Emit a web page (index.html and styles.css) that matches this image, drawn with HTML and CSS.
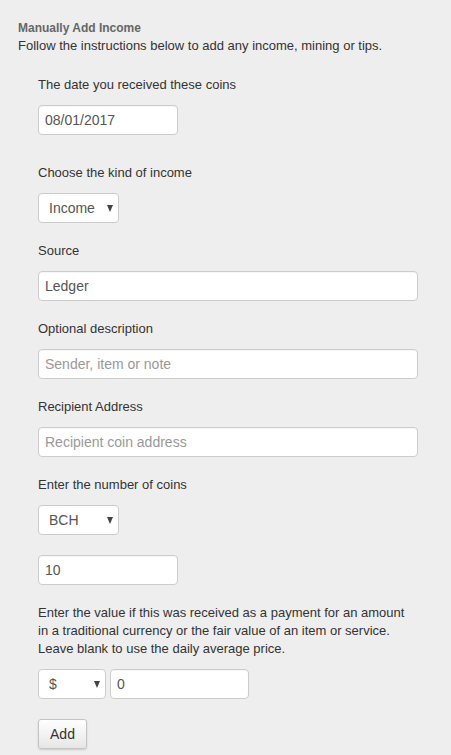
FILE: index.html
```html
<!DOCTYPE html>
<html>
<head>
<meta charset="utf-8">
<link rel="stylesheet" href="styles.css">
</head>
<body>
<div class="panel">
  <h4 class="title">Manually Add Income</h4>
  <p class="intro">Follow the instructions below to add any income, mining or tips.</p>
  <form class="form">
    <div class="group group-date">
      <label class="label">The date you received these coins</label>
      <input class="field short" type="text" value="08/01/2017">
    </div>
    <div class="group">
      <label class="label">Choose the kind of income</label>
      <span class="select-wrap sel-kind"><select class="select"><option>Income</option></select></span>
    </div>
    <div class="group">
      <label class="label">Source</label>
      <input class="field wide" type="text" value="Ledger">
    </div>
    <div class="group">
      <label class="label">Optional description</label>
      <input class="field wide" type="text" placeholder="Sender, item or note">
    </div>
    <div class="group">
      <label class="label">Recipient Address</label>
      <input class="field wide" type="text" placeholder="Recipient coin address">
    </div>
    <div class="group">
      <label class="label">Enter the number of coins</label>
      <span class="select-wrap sel-kind"><select class="select"><option>BCH</option></select></span>
      <div class="spacer"></div>
      <input class="field short" type="text" value="10">
    </div>
    <p class="note">Enter the value if this was received as a payment for an amount in a traditional currency or the fair value of an item or service. Leave blank to use the daily average price.</p>
    <div class="row">
      <span class="select-wrap sel-cur"><select class="select"><option>$</option></select></span>
      <input class="field amount" type="text" value="0">
    </div>
    <button class="btn" type="button">Add</button>
  </form>
</div>
</body>
</html>
```
FILE: styles.css
```css
html, body {
  margin: 0;
  padding: 0;
  background: #eeeeee;
}
body {
  font-family: "Liberation Sans", Arial, sans-serif;
  font-size: 13px;
  color: #333;
  width: 451px;
  height: 755px;
  overflow: hidden;
}
.panel {
  padding: 18px 0 0 18px;
}
.title {
  margin: 0;
  padding-top: 1px;
  font-size: 12px;
  font-weight: bold;
  color: #666;
  line-height: 18px;
}
.intro {
  margin: 0;
  line-height: 18px;
}
.form {
  margin: 21px 0 0 20px;
  width: 380px;
}
.group {
  margin-bottom: 19px;
  display: flex;
  flex-direction: column;
  align-items: flex-start;
}
.group-date {
  margin-bottom: 29px;
}
.label {
  display: block;
  line-height: 18px;
  margin-bottom: 11px;
}
.field {
  box-sizing: border-box;
  height: 30px;
  border: 1px solid #ccc;
  border-radius: 4px;
  background: #fff;
  padding: 0 6px;
  font-family: "Liberation Sans", Arial, sans-serif;
  font-size: 14px;
  color: #555;
  box-shadow: inset 0 1px 1px rgba(0,0,0,0.04);
  outline: none;
  margin: 0;
}
.field::placeholder {
  color: #999;
}
.short { width: 140px; }
.wide { width: 380px; }
.amount { width: 139px; }
.select-wrap {
  position: relative;
  display: inline-block;
}
.select-wrap::after {
  content: "";
  position: absolute;
  right: 6px;
  top: 12px;
  border-left: 3.5px solid transparent;
  border-right: 3.5px solid transparent;
  border-top: 7px solid #444;
  pointer-events: none;
}
.select {
  appearance: none;
  -webkit-appearance: none;
  box-sizing: border-box;
  height: 30px;
  border: 1px solid #ccc;
  border-radius: 4px;
  background: #fff;
  padding: 0 18px 0 10px;
  font-family: "Liberation Sans", Arial, sans-serif;
  font-size: 14px;
  color: #555;
  outline: none;
  margin: 0;
}
.sel-kind .select { width: 81px; }
.sel-cur .select { width: 68px; }
.spacer { height: 20px; }
.note {
  margin: 0 0 11px;
  line-height: 18px;
  width: 375px;
}
.row {
  display: flex;
  gap: 4px;
  margin-bottom: 20px;
}
.btn {
  box-sizing: border-box;
  height: 30px;
  width: 49px;
  padding: 0;
  border: 1px solid #c4c4c4;
  border-radius: 3px;
  background: linear-gradient(#ffffff, #e6e6e6);
  box-shadow: 0 1px 2px rgba(0,0,0,0.15);
  font-family: "Liberation Sans", Arial, sans-serif;
  font-size: 14px;
  color: #333;
}
```
